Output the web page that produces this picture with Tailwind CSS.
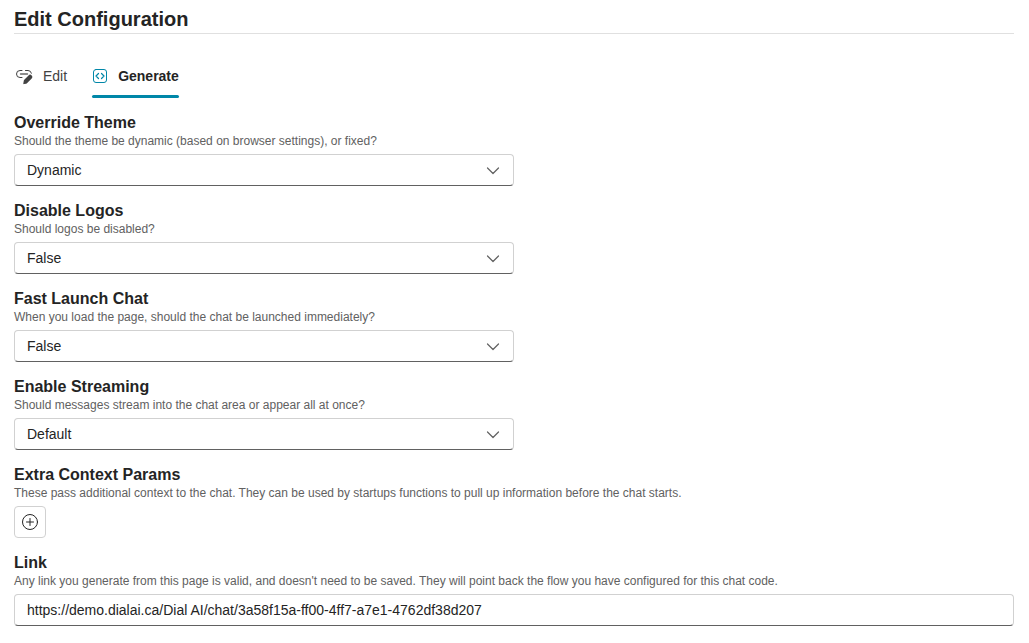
<!DOCTYPE html>
<html lang="en">
<head>
<meta charset="utf-8">
<title>Edit Configuration</title>
<script src="https://cdn.jsdelivr.net/npm/@tailwindcss/browser@4"></script>
</head>
<body class="bg-white pt-[5px] pr-[15px] pb-4 pl-[14px] font-['Liberation_Sans',Arial,sans-serif] text-sm text-[#242424]">
<header class="border-b border-[#e0e0e0]">
  <h1 class="text-xl leading-7 font-bold">Edit Configuration</h1>
</header>
<div role="tablist" class="mt-5 mb-[15px] flex h-11 gap-[23px]">
  <button role="tab" aria-selected="false" class="flex items-center gap-[9px] text-[#424242]">
    <svg class="size-5" viewBox="0 0 20 20" fill="none" stroke="currentColor" stroke-linecap="round" aria-hidden="true">
      <path d="M8 11.500H6a3.500 3.500 0 0 1 0-7H8M11.500 4.500H14a3.500 3.500 0 0 1 3.400 2.700"/>
      <path d="M6.500 8h7" stroke-width="1.300" opacity=".8"/>
      <path d="M10 13.900l4.500-4.500a2.200 2.200 0 0 1 3.200 3.200l-4.500 4.500c-.3.300-.7.500-1.100.6l-2 .4a.6.600 0 0 1-.8-.7l.4-2.200c.1-.5.200-.9.300-1.300z" fill="currentColor" stroke="none"/>
    </svg>
    <span>Edit</span>
  </button>
  <button role="tab" aria-selected="true" class="relative flex items-center gap-2 pr-px font-bold">
    <svg class="size-5 text-[#0087a8]" viewBox="0 0 20 20" fill="none" stroke="currentColor" stroke-linecap="round" stroke-linejoin="round" aria-hidden="true">
      <rect x="3.500" y="3.500" width="13" height="13" rx="2.500"/>
      <path stroke-width="1.200" d="M8.500 7.500L6 10l2.500 2.500M11.500 7.500L14 10l-2.500 2.500"/>
    </svg>
    <span>Generate</span>
    <span class="absolute right-px bottom-0 left-0.5 h-[3px] rounded-full bg-[#0087a8]"></span>
  </button>
</div>
<main class="flex flex-col gap-[15px]">
  <section>
    <label for="theme" class="block text-base leading-5 font-bold">Override Theme</label>
    <p class="mb-[5px] text-xs leading-4 text-[#616161]">Should the theme be dynamic (based on browser settings), or fixed?</p>
    <div class="grid max-w-[500px] items-center">
      <select id="theme" class="col-start-1 row-start-1 h-8 w-full appearance-none rounded border border-[#d1d1d1] border-b-[#616161] bg-white px-3 text-sm"><option>Dynamic</option></select>
      <svg class="pointer-events-none col-start-1 row-start-1 mr-[11px] size-5 justify-self-end text-[#616161]" viewBox="0 0 20 20" fill="none" stroke="currentColor" stroke-width="1.200" stroke-linecap="round" stroke-linejoin="round" aria-hidden="true"><path d="M4.500 8L10 13.500l5.500-5.500"/></svg>
    </div>
  </section>
  <section>
    <label for="logos" class="block text-base leading-5 font-bold">Disable Logos</label>
    <p class="mb-[5px] text-xs leading-4 text-[#616161]">Should logos be disabled?</p>
    <div class="grid max-w-[500px] items-center">
      <select id="logos" class="col-start-1 row-start-1 h-8 w-full appearance-none rounded border border-[#d1d1d1] border-b-[#616161] bg-white px-3 text-sm"><option>False</option></select>
      <svg class="pointer-events-none col-start-1 row-start-1 mr-[11px] size-5 justify-self-end text-[#616161]" viewBox="0 0 20 20" fill="none" stroke="currentColor" stroke-width="1.200" stroke-linecap="round" stroke-linejoin="round" aria-hidden="true"><path d="M4.500 8L10 13.500l5.500-5.500"/></svg>
    </div>
  </section>
  <section>
    <label for="fast" class="block text-base leading-5 font-bold">Fast Launch Chat</label>
    <p class="mb-[5px] text-xs leading-4 text-[#616161]">When you load the page, should the chat be launched immediately?</p>
    <div class="grid max-w-[500px] items-center">
      <select id="fast" class="col-start-1 row-start-1 h-8 w-full appearance-none rounded border border-[#d1d1d1] border-b-[#616161] bg-white px-3 text-sm"><option>False</option></select>
      <svg class="pointer-events-none col-start-1 row-start-1 mr-[11px] size-5 justify-self-end text-[#616161]" viewBox="0 0 20 20" fill="none" stroke="currentColor" stroke-width="1.200" stroke-linecap="round" stroke-linejoin="round" aria-hidden="true"><path d="M4.500 8L10 13.500l5.500-5.500"/></svg>
    </div>
  </section>
  <section>
    <label for="stream" class="block text-base leading-5 font-bold">Enable Streaming</label>
    <p class="mb-[5px] text-xs leading-4 text-[#616161]">Should messages stream into the chat area or appear all at once?</p>
    <div class="grid max-w-[500px] items-center">
      <select id="stream" class="col-start-1 row-start-1 h-8 w-full appearance-none rounded border border-[#d1d1d1] border-b-[#616161] bg-white px-3 text-sm"><option>Default</option></select>
      <svg class="pointer-events-none col-start-1 row-start-1 mr-[11px] size-5 justify-self-end text-[#616161]" viewBox="0 0 20 20" fill="none" stroke="currentColor" stroke-width="1.200" stroke-linecap="round" stroke-linejoin="round" aria-hidden="true"><path d="M4.500 8L10 13.500l5.500-5.500"/></svg>
    </div>
  </section>
  <section>
    <h2 id="params" class="text-base leading-5 font-bold">Extra Context Params</h2>
    <p class="mb-[5px] text-xs leading-4 text-[#616161]">These pass additional context to the chat. They can be used by startups functions to pull up information before the chat starts.</p>
    <button aria-labelledby="params" class="flex size-8 items-center justify-center rounded border border-[#d1d1d1] bg-white">
      <svg class="size-5" viewBox="0 0 20 20" fill="none" stroke="currentColor" stroke-linecap="round" aria-hidden="true"><circle cx="10" cy="10" r="7.500"/><path d="M10 6.500v7M6.500 10h7"/></svg>
    </button>
  </section>
  <section>
    <label for="link" class="block text-base leading-5 font-bold">Link</label>
    <p class="mb-[5px] text-xs leading-4 text-[#616161]">Any link you generate from this page is valid, and doesn't need to be saved. They will point back the flow you have configured for this chat code.</p>
    <input id="link" type="text" value="https://demo.dialai.ca/Dial AI/chat/3a58f15a-ff00-4ff7-a7e1-4762df38d207" class="block h-8 w-full rounded border border-[#d1d1d1] border-b-[#616161] bg-white px-3 text-sm">
  </section>
</main>
</body>
</html>
